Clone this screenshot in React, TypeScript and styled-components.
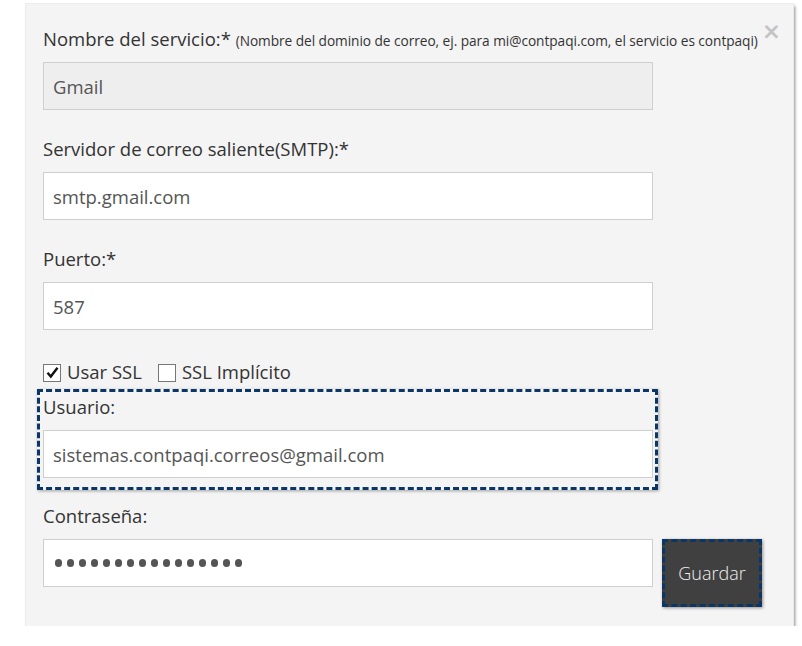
import React from "react";
import styled, { createGlobalStyle } from "styled-components";

const GlobalStyle = createGlobalStyle`
    body {
        margin: 0;
        background: #ffffff;
        font-family: "Open Sans", "Noto Sans", sans-serif;
    }
`;

export default function App() {
    return (
        <>
            <GlobalStyle />
            <Page>
                <Panel>
                    <CloseButton>×</CloseButton>

                    <Label>
                        Nombre del servicio:*{" "}
                        <Hint>(Nombre del dominio de correo, ej. para mi@contpaqi.com, el servicio es contpaqi)</Hint>
                    </Label>
                    <Input disabled>Gmail</Input>

                    <Label>Servidor de correo saliente(SMTP):*</Label>
                    <Input>smtp.gmail.com</Input>

                    <Label>Puerto:*</Label>
                    <Input>587</Input>

                    <CheckRow>
                        <CheckItem>
                            <CheckBox>
                                <svg width="13" height="13" viewBox="0 0 13 13">
                                    <path d="M1.5 6.8 L4.8 10.5 L11.5 1.8" fill="none" stroke="#111" strokeWidth="2.4" />
                                </svg>
                            </CheckBox>
                            Usar SSL
                        </CheckItem>
                        <CheckItem>
                            <CheckBox />
                            SSL Implícito
                        </CheckItem>
                    </CheckRow>

                    <Highlight>
                        <Label>Usuario:</Label>
                        <Input $last>sistemas.contpaqi.correos@gmail.com</Input>
                    </Highlight>

                    <Label>Contraseña:</Label>
                    <PasswordRow>
                        <Input $last>
                            <Dots>
                                {Array.from({ length: 16 }, (_, i) => (
                                    <Dot key={i} />
                                ))}
                            </Dots>
                        </Input>
                        <SaveButton>Guardar</SaveButton>
                    </PasswordRow>
                </Panel>
            </Page>
        </>
    );
}

const Page = styled.div`
    padding: 4px 0 0 26px;
`;

const Panel = styled.div`
    position: relative;
    box-sizing: border-box;
    display: flex;
    flex-direction: column;
    align-items: flex-start;
    width: 767px;
    height: 622px;
    padding: 22px 0 0 17px;
    background: #f4f4f4;
    box-shadow: 0 0 0 1px #ececec, 2px 2px 3px rgba(0, 0, 0, 0.45);
    color: #333;
`;

const CloseButton = styled.div`
    position: absolute;
    top: 15px;
    right: 12px;
    font-family: "DejaVu Sans", sans-serif;
    font-size: 23px;
    font-weight: bold;
    line-height: 24px;
    color: #c4c4c4;
`;

const Label = styled.div`
    height: 26px;
    line-height: 26px;
    margin-bottom: 10px;
    font-size: 18.5px;
    color: #333;
    white-space: nowrap;
`;

const Hint = styled.span`
    font-size: 13.7px;
    letter-spacing: -0.05px;
`;

const Input = styled.div<{ disabled?: boolean; $last?: boolean }>`
    box-sizing: border-box;
    width: 610px;
    height: 48px;
    flex-shrink: 0;
    margin-bottom: ${(p) => (p.$last ? 0 : 26)}px;
    padding: 0 9px;
    display: flex;
    align-items: center;
    background: ${(p) => (p.disabled ? "#eeeeee" : "#ffffff")};
    border: 1px solid #cfcfcf;
    font-size: 18.5px;
    color: #555;
`;

const CheckRow = styled.div`
    display: flex;
    gap: 16px;
    height: 24px;
    margin-top: 3px;
    font-size: 18.5px;
    color: #333;
`;

const CheckItem = styled.label`
    display: flex;
    align-items: center;
    gap: 6px;
`;

const CheckBox = styled.span`
    box-sizing: border-box;
    width: 18px;
    height: 18px;
    margin-top: 3px;
    display: flex;
    align-items: center;
    justify-content: center;
    background: #fff;
    border: 1px solid #777;
`;

const Highlight = styled.div`
    box-sizing: border-box;
    width: 621px;
    margin: 6px 0 13px -6px;
    padding: 2px 2px 9px 3px;
    border: 3px dashed #0b3768;
    box-shadow: 1px 1px 3px rgba(0, 0, 0, 0.35);
`;

const PasswordRow = styled.div`
    display: flex;
    align-items: flex-start;
    gap: 9px;
`;

const Dots = styled.span`
    display: flex;
    gap: 4.7px;
    padding-left: 2px;
`;

const Dot = styled.span`
    width: 7.3px;
    height: 7.3px;
    border-radius: 50%;
    background: #555;
`;

const SaveButton = styled.button`
    box-sizing: border-box;
    width: 100px;
    height: 68px;
    background: #404040;
    border: 3px dashed #0b3768;
    box-shadow: 1px 1px 3px rgba(0, 0, 0, 0.4);
    font-family: "Open Sans", "Noto Sans", sans-serif;
    font-size: 18px;
    font-weight: 300;
    color: #f0f0f0;
    padding: 0;
`;
